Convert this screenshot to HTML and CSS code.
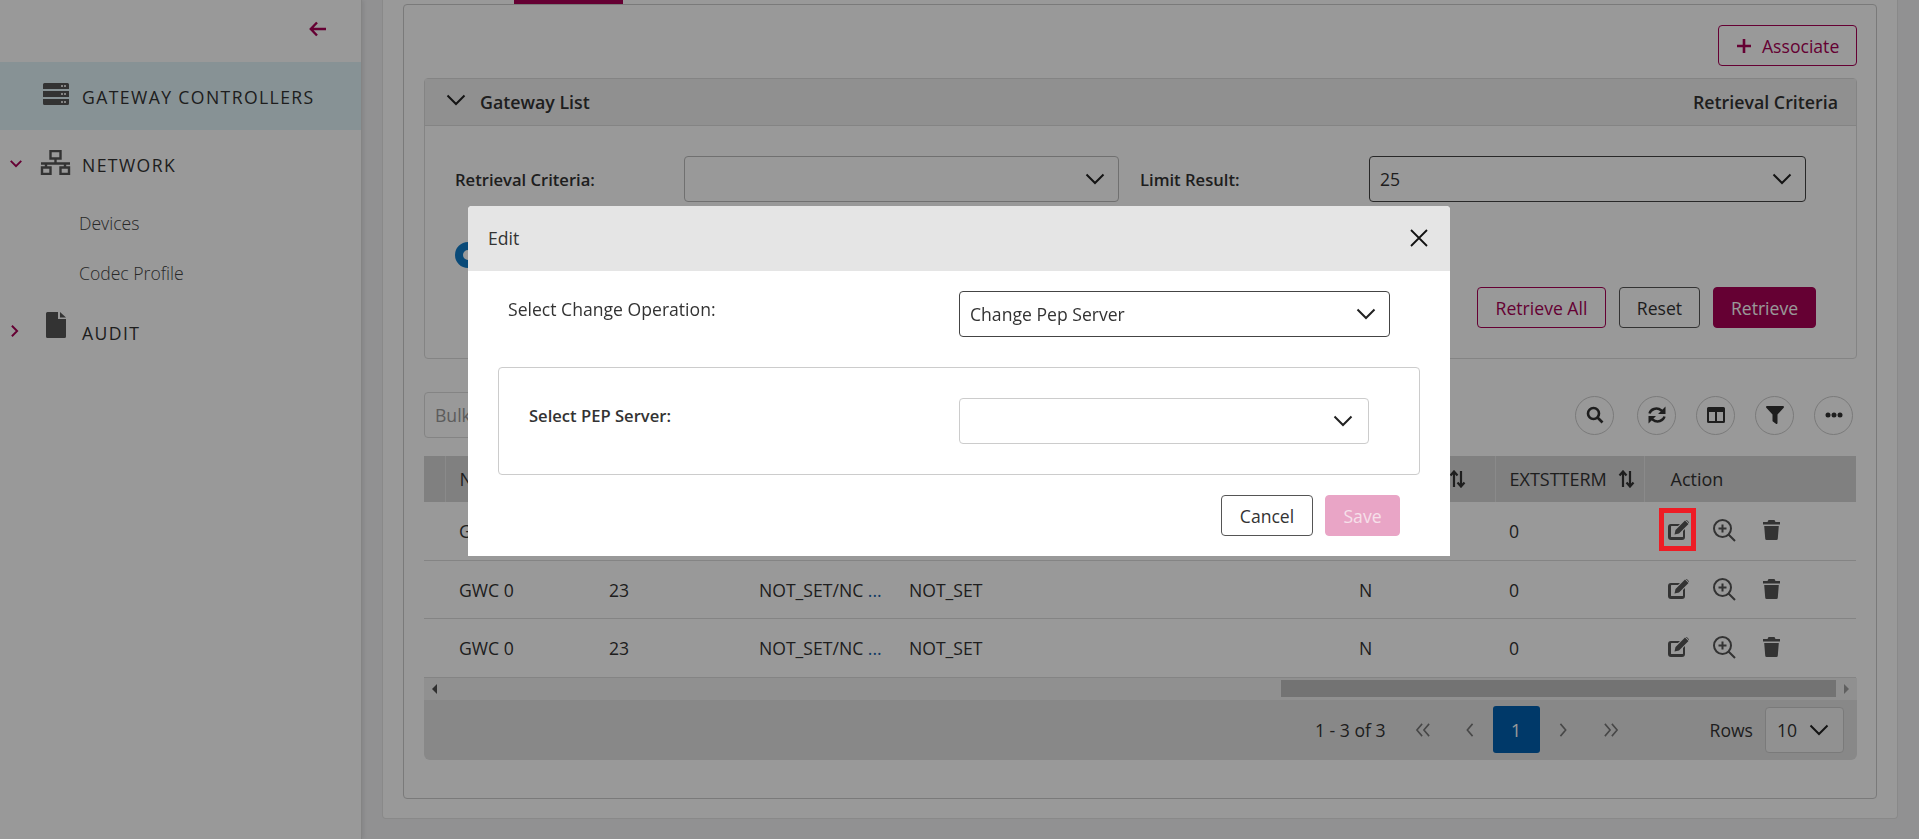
FILE: index.html
```html
<!DOCTYPE html>
<html>
<head>
    <title>Gateway Controllers</title>
    <link rel="stylesheet" href="styles.css">
</head>
<body>

    <div class="page">
        <aside class="sidebar">
            <div class="side-top">
                <svg class="back-arrow" viewBox="0 0 18 16"><path d="M8 1.500 1.800 8 8 14.500M2 8h15" /></svg>
            </div>
            <a class="nav-item active">
                <span class="caret"></span>
                <svg class="nav-icon" viewBox="0 0 26 22"><path d="M1.500 0h23A1.500 1.500 0 0 1 26 1.500V6H0V1.500A1.500 1.500 0 0 1 1.500 0zM0 8h26v6H0zM0 16h26v4.500a1.500 1.500 0 0 1-1.500 1.500h-23A1.500 1.500 0 0 1 0 20.500z" /><path class="dots" d="M18 2h2v2h-2zM21 2h2v2h-2zM18 10h2v2h-2zM21 10h2v2h-2zM18 18h2v2h-2zM21 18h2v2h-2z" /></svg>
                <span class="nav-label">GATEWAY CONTROLLERS</span>
            </a>
            <a class="nav-item">
                <svg class="caret" viewBox="0 0 16 10"><path d="M2 2l6 6 6-6" /></svg>
                <svg class="nav-icon" viewBox="0 0 31 25"><path class="line" d="M10.500 1h10v7.500h-10zM15.500 8.500v5M1 13.500h29M6 13.500v4M25 13.500v4M2 17.500h8.500V24H2zM20.500 17.500H29V24h-8.500z" /></svg>
                <span class="nav-label">NETWORK</span>
            </a>
            <a class="sub-item">Devices</a>
            <a class="sub-item">Codec Profile</a>
            <a class="nav-item audit">
                <svg class="caret caret-right" viewBox="0 0 10 16"><path d="M2 2l6 6-6 6" /></svg>
                <svg class="nav-icon file" viewBox="0 0 20 26"><path d="M0 1.500A1.500 1.500 0 0 1 1.500 0H12v7h8v17.500a1.500 1.500 0 0 1-1.500 1.500h-17A1.500 1.500 0 0 1 0 24.500zM14 0l6 5.500h-6z" /></svg>
                <span class="nav-label">AUDIT</span>
            </a>
        </aside>

        <main class="main">
            <div class="outer-card">
                <div class="tab-mark"></div>
                <div class="panel">
                    <div class="panel-actions">
                        <button class="btn btn-outline btn-associate"><svg viewBox="0 0 16 16"><path d="M8 1v14M1 8h14" /></svg>Associate</button>
                    </div>

                    <section class="criteria">
                        <div class="criteria-head">
                            <svg class="chev chev-head" viewBox="0 0 20 12"><path d="M1.500 1.500 10 10l8.500-8.500" /></svg>
                            <span class="criteria-title">Gateway List</span>
                            <span class="criteria-side">Retrieval Criteria</span>
                        </div>
                        <div class="criteria-body">
                            <div class="criteria-form">
                                <label class="form-label">Retrieval Criteria:</label>
                                <div class="select select-muted"><svg class="chev" viewBox="0 0 20 12"><path d="M1.500 1.500 10 10l8.500-8.500" /></svg></div>
                                <label class="form-label limit-label">Limit Result:</label>
                                <div class="select select-dark"><span>25</span><svg class="chev" viewBox="0 0 20 12"><path d="M1.500 1.500 10 10l8.500-8.500" /></svg></div>
                            </div>
                            <div class="radio-row"><span class="radio-dot"></span></div>
                            <div class="criteria-buttons">
                                <button class="btn btn-outline">Retrieve All</button>
                                <button class="btn btn-plain">Reset</button>
                                <button class="btn btn-primary">Retrieve</button>
                            </div>
                        </div>
                    </section>

                    <div class="toolbar">
                        <input class="bulk-input" placeholder="Bulk">
                        <div class="tool-group">
                            <span class="tool"><svg viewBox="0 0 18 18"><circle cx="7.500" cy="7.500" r="5.500" class="ring" /><path class="ring" d="M11.500 11.500 16.500 16.500" /></svg></span>
                            <span class="tool"><svg viewBox="0 0 20 20"><path class="ring sync" d="M2.500 8.500C3.500 4.500 9.500 1.500 14.500 5.500L17 8M17.500 11.500C16.500 15.500 10.500 18.500 5.500 14.500L3 12" /><path d="M18.500 1.500v7.500h-7.500zM1.500 18.500v-7.500h7.500z" /></svg></span>
                            <span class="tool"><svg viewBox="0 0 18 16"><path d="M1.500 0h15A1.500 1.500 0 0 1 18 1.500v13a1.500 1.500 0 0 1-1.500 1.500h-15A1.500 1.500 0 0 1 0 14.500v-13A1.500 1.500 0 0 1 1.500 0zM2 5v9h6V5zM10 5v9h6V5z" fill-rule="evenodd" /></svg></span>
                            <span class="tool"><svg viewBox="0 0 18 18"><path d="M1 0h16a1 1 0 0 1 .7 1.700L11.500 8.500V17a1 1 0 0 1-1.600.8l-3-2.300a1 1 0 0 1-.4-.8V8.500L.3 1.700A1 1 0 0 1 1 0z" /></svg></span>
                            <span class="tool"><svg viewBox="0 0 18 6"><circle cx="3" cy="3" r="2.500" /><circle cx="9" cy="3" r="2.500" /><circle cx="15" cy="3" r="2.500" /></svg></span>
                        </div>
                    </div>

                    <table class="grid">
                        <thead>
                            <tr>
                                <th class="col-check"></th>
                                <th>Name</th>
                                <th></th>
                                <th></th>
                                <th></th>
                                <th></th>
                                <th></th>
                                <th><span class="th-inner"><span class="th-wide"></span><svg class="sort" viewBox="0 0 16 18"><path d="M4.500 17V2M1 5.500l3.500-4 3.500 4M11.500 1v15M8 12.500l3.500 4 3.500-4" /></svg></span></th>
                                <th class="col-ext"><span class="th-inner">EXTSTTERM<svg class="sort" viewBox="0 0 16 18"><path d="M4.500 17V2M1 5.500l3.500-4 3.500 4M11.500 1v15M8 12.500l3.500 4 3.500-4" /></svg></span></th>
                                <th class="col-action">Action</th>
                            </tr>
                        </thead>
                        <tbody>
                            <tr>
                                <td></td><td>GWC 0</td><td></td><td></td><td></td><td></td><td></td><td></td><td>0</td>
                                <td class="col-action">
                                    <div class="row-actions">
                                        <span class="act">
                                            <svg class="ic-edit" viewBox="0 0 21 20"><path d="M3 4h9l-2 2H3.500a.5.500 0 0 0-.5.500v10a.5.500 0 0 0 .5.500h11a.5.500 0 0 0 .5-.500V11l2-2v8a3 3 0 0 1-3 3H3a3 3 0 0 1-3-3V7a3 3 0 0 1 3-3zM17 .5l3.500 3.500L11 13.500l-4.500 1 1-4.500zM17.800 0l1 0 2.200 2.200v1z" /></svg>
                                            <span class="flag"></span>
                                        </span>
                                        <span class="act"><svg class="ic-zoom" viewBox="0 0 23 23"><circle class="ring thin" cx="9.500" cy="9.500" r="8.500" /><path class="ring thin" d="M15.500 15.500l6.500 6.500M9.500 5.500v8M5.500 9.500h8" /></svg></span>
                                        <span class="act"><svg class="ic-trash" viewBox="0 0 17 20"><path d="M5.500 0h6l1 2H17v2.500H0V2h4.500zM1.200 6h14.600l-1 12.500a1.500 1.500 0 0 1-1.500 1.500H3.700a1.500 1.500 0 0 1-1.500-1.500z" /></svg></span>
                                    </div>
                                </td>
                            </tr>
                            <tr>
                                <td></td><td>GWC 0</td><td>23</td><td>NOT_SET/NC <span class="more">...</span></td><td>NOT_SET</td><td></td><td></td><td>N</td><td>0</td>
                                <td class="col-action">
                                    <div class="row-actions">
                                        <span class="act"><svg class="ic-edit" viewBox="0 0 21 20"><path d="M3 4h9l-2 2H3.500a.5.500 0 0 0-.5.500v10a.5.500 0 0 0 .5.500h11a.5.500 0 0 0 .5-.500V11l2-2v8a3 3 0 0 1-3 3H3a3 3 0 0 1-3-3V7a3 3 0 0 1 3-3zM17 .5l3.500 3.500L11 13.500l-4.500 1 1-4.500zM17.800 0l1 0 2.200 2.200v1z" /></svg></span>
                                        <span class="act"><svg class="ic-zoom" viewBox="0 0 23 23"><circle class="ring thin" cx="9.500" cy="9.500" r="8.500" /><path class="ring thin" d="M15.500 15.500l6.500 6.500M9.500 5.500v8M5.500 9.500h8" /></svg></span>
                                        <span class="act"><svg class="ic-trash" viewBox="0 0 17 20"><path d="M5.500 0h6l1 2H17v2.500H0V2h4.500zM1.200 6h14.600l-1 12.500a1.500 1.500 0 0 1-1.500 1.500H3.700a1.500 1.500 0 0 1-1.500-1.500z" /></svg></span>
                                    </div>
                                </td>
                            </tr>
                            <tr class="row-last">
                                <td></td><td>GWC 0</td><td>23</td><td>NOT_SET/NC <span class="more">...</span></td><td>NOT_SET</td><td></td><td></td><td>N</td><td>0</td>
                                <td class="col-action">
                                    <div class="row-actions">
                                        <span class="act"><svg class="ic-edit" viewBox="0 0 21 20"><path d="M3 4h9l-2 2H3.500a.5.500 0 0 0-.5.500v10a.5.500 0 0 0 .5.500h11a.5.500 0 0 0 .5-.500V11l2-2v8a3 3 0 0 1-3 3H3a3 3 0 0 1-3-3V7a3 3 0 0 1 3-3zM17 .5l3.500 3.500L11 13.500l-4.500 1 1-4.500zM17.800 0l1 0 2.200 2.200v1z" /></svg></span>
                                        <span class="act"><svg class="ic-zoom" viewBox="0 0 23 23"><circle class="ring thin" cx="9.500" cy="9.500" r="8.500" /><path class="ring thin" d="M15.500 15.500l6.500 6.500M9.500 5.500v8M5.500 9.500h8" /></svg></span>
                                        <span class="act"><svg class="ic-trash" viewBox="0 0 17 20"><path d="M5.500 0h6l1 2H17v2.500H0V2h4.500zM1.200 6h14.600l-1 12.500a1.500 1.500 0 0 1-1.500 1.500H3.700a1.500 1.500 0 0 1-1.500-1.500z" /></svg></span>
                                    </div>
                                </td>
                            </tr>
                        </tbody>
                    </table>

                    <div class="hscroll">
                        <span class="arrow-left"></span>
                        <span class="thumb"></span>
                        <span class="arrow-right"></span>
                    </div>

                    <div class="pager">
                        <span class="page-count">1 - 3 of 3</span>
                        <svg class="page-arrow first" viewBox="0 0 18 16"><path d="M8 1 2 8l6 7M16 1l-6 7 6 7" /></svg>
                        <svg class="page-arrow prev" viewBox="0 0 9 16"><path d="M8 1 2 8l6 7" /></svg>
                        <span class="page-current">1</span>
                        <svg class="page-arrow next" viewBox="0 0 9 16"><path d="M1 1l6 7-6 7" /></svg>
                        <svg class="page-arrow last" viewBox="0 0 18 16"><path d="M2 1l6 7-6 7M10 1l6 7-6 7" /></svg>
                        <span class="rows-label">Rows</span>
                        <div class="rows-select"><span>10</span><svg class="chev" viewBox="0 0 20 12"><path d="M1.500 1.500 10 10l8.500-8.500" /></svg></div>
                    </div>
                </div>
            </div>
        </main>
    </div>

    <div class="mask"></div>

    <div class="dialog">
        <div class="dialog-head">
            <span>Edit</span>
            <svg class="dialog-close" viewBox="0 0 18 18"><path d="M1 1l16 16M17 1 1 17" /></svg>
        </div>
        <div class="dialog-body">
            <div class="dialog-row">
                <label class="dialog-label">Select Change Operation:</label>
                <div class="select select-dark dialog-select"><span>Change Pep Server</span><svg class="chev" viewBox="0 0 20 12"><path d="M1.500 1.500 10 10l8.500-8.500" /></svg></div>
            </div>
            <div class="dialog-box">
                <label class="box-label">Select PEP Server:</label>
                <div class="select box-select"><svg class="chev" viewBox="0 0 20 12"><path d="M1.500 1.500 10 10l8.500-8.500" /></svg></div>
            </div>
            <div class="dialog-buttons">
                <button class="btn btn-cancel">Cancel</button>
                <button class="btn btn-save">Save</button>
            </div>
        </div>
    </div>

</body>
</html>
```

FILE: styles.css
```css
* {
    box-sizing: border-box;
}

html, body {
    margin: 0;
    height: 839px;
    overflow: hidden;
}

body {
    font-family: "Open Sans", Arial, sans-serif;
    font-size: 17.6px;
    color: #333;
}

button {
    font-family: inherit;
}

.page {
    display: flex;
    height: 839px;
    background-color: #f2f2f4;
}

/* left menu */
.sidebar {
    width: 362px;
    flex-shrink: 0;
    background-color: #fff;
    border-right: 1px solid #ddd;
    box-shadow: 2px 0 4px rgba(0, 0, 0, 0.08);
}

.side-top {
    height: 62px;
    padding: 21px 0 0 309px;
}

.back-arrow {
    display: block;
    width: 18px;
    height: 16px;
    fill: none;
    stroke: #a80055;
    stroke-width: 2.4;
}

.nav-item {
    display: flex;
    align-items: center;
    height: 68px;
    letter-spacing: 1.4px;
    font-weight: 500;
    position: relative;
}

.nav-item.active {
    background-color: #e2f3f9;
}

.nav-item .caret {
    position: absolute;
    left: 9px;
    top: 29px;
    width: 14px;
    height: 9px;
    fill: none;
    stroke: #a80055;
    stroke-width: 2.2;
}

.nav-item .caret-right {
    left: 10px;
    top: 26px;
    width: 9px;
    height: 14px;
}

.nav-icon {
    position: absolute;
    left: 43px;
    top: 21px;
    width: 26px;
    height: 22px;
    fill: #555;
}

.nav-icon .dots {
    fill: #ddd;
}

.nav-icon .line {
    fill: none;
    stroke: #555;
    stroke-width: 2.4;
}

.nav-item:nth-child(3) .nav-icon {
    left: 40px;
    top: 20px;
    width: 31px;
    height: 25px;
}

.nav-icon.file {
    left: 46px;
    top: 14px;
    width: 20px;
    height: 26px;
}

.nav-label {
    margin-left: 82px;
    padding-top: 2px;
    color: #333;
}

.sub-item {
    display: flex;
    align-items: center;
    height: 50px;
    padding-left: 79px;
    font-weight: 300;
    color: #444;
}

/* content */
.main {
    flex: 1;
    padding: 0 21px 20px 20px;
}

.outer-card {
    height: 819px;
    background-color: #fff;
    border: 1px solid #e4e4e4;
    border-top: none;
    border-radius: 0 0 4px 4px;
    padding: 0 20px 20px;
}

.tab-mark {
    width: 109px;
    height: 4px;
    margin-left: 111px;
    background-color: #a80055;
}

.panel {
    height: 795px;
    border: 1px solid #ccc;
    border-radius: 4px;
    padding: 20px 19px 0 20px;
}

.panel-actions {
    display: flex;
    justify-content: flex-end;
}

.btn {
    height: 41px;
    padding: 0 18px;
    font-size: 17.6px;
    border-radius: 4px;
    background-color: transparent;
    color: #333;
}

.btn-outline {
    border: 1px solid #a80055;
    color: #a80055;
}

.btn-plain {
    border: 1px solid #555;
    color: #333;
}

.btn-primary {
    border: 1px solid #a80055;
    background-color: #a80055;
    color: #fff;
}

.btn-associate {
    display: flex;
    align-items: center;
    gap: 10px;
    width: 139px;
    padding: 0 17px;
    white-space: nowrap;
}

.btn-associate svg {
    width: 16px;
    height: 16px;
    fill: none;
    stroke: #a80055;
    stroke-width: 2.6;
    flex-shrink: 0;
}

/* retrieval section */
.criteria {
    margin-top: 12px;
    border: 1px solid #ddd;
    border-radius: 4px;
}

.criteria-head {
    display: flex;
    align-items: center;
    height: 47px;
    padding: 0 18px 0 21px;
    background-color: #f0f0f0;
    border-bottom: 1px solid #ddd;
    font-size: 17.8px;
    font-weight: 550;
}

.chev {
    display: block;
    width: 20px;
    height: 12px;
    fill: none;
    stroke: #222;
    stroke-width: 2;
    flex-shrink: 0;
}

.chev-head {
    margin: -4px 14px 0 0;
}

.criteria-title {
    flex: 1;
}

.criteria-body {
    padding: 30px 0 30px;
    height: 232px;
}

.criteria-form {
    display: grid;
    grid-template-columns: 259px 435px 250px 437px;
    align-items: center;
}

.form-label {
    padding-left: 30px;
    font-size: 16.6px;
    font-weight: 550;
}

.limit-label {
    padding-left: 21px;
}

.select {
    display: flex;
    align-items: center;
    justify-content: space-between;
    height: 46px;
    padding: 0 13px 0 10px;
    border-radius: 4px;
    background-color: #fff;
}

.select .chev {
    margin-left: auto;
}

.select-muted {
    border: 1px solid #bbb;
}

.select-dark {
    border: 1px solid #444;
}

.radio-row {
    height: 26px;
    margin-top: 40px;
    padding-left: 30px;
}

.radio-dot {
    display: block;
    width: 26px;
    height: 26px;
    border-radius: 50%;
    border: 8px solid #127cc8;
}

.criteria-buttons {
    display: flex;
    justify-content: flex-end;
    gap: 13px;
    margin-top: 19px;
    padding-right: 40px;
}

.criteria-buttons .btn-outline {
    width: 129px;
    padding: 0;
}

.criteria-buttons .btn-plain {
    width: 81px;
    padding: 0;
}

.criteria-buttons .btn-primary {
    width: 103px;
    padding: 0;
}

/* toolbar above table */
.toolbar {
    display: flex;
    align-items: center;
    justify-content: space-between;
    margin-top: 33px;
    height: 46px;
}

.bulk-input {
    width: 220px;
    height: 46px;
    padding: 0 10px;
    border: 1px solid #ddd;
    border-radius: 4px;
    font-family: inherit;
    font-size: 17.6px;
}

.bulk-input::placeholder {
    color: #999;
}

.tool-group {
    display: flex;
    gap: 20px;
    padding-right: 4px;
}

.tool {
    display: flex;
    align-items: center;
    justify-content: center;
    width: 39px;
    height: 39px;
    border: 1px solid #ccc;
    border-radius: 50%;
}

.tool:first-child {
    margin-right: 3px;
}

.tool svg {
    width: 18px;
    height: 18px;
    fill: #333;
}

.tool:nth-child(2) svg {
    width: 20px;
    height: 20px;
}

.ring {
    fill: none;
    stroke: #333;
    stroke-width: 2.6;
}

.ring.thin {
    stroke-width: 2;
}

.ring.sync {
    stroke-width: 2.4;
}

/* table */
.grid {
    width: 1432px;
    margin-top: 18px;
    border-collapse: collapse;
    table-layout: fixed;
}

.grid th {
    width: 150px;
    height: 46px;
    padding: 0 0 0 14px;
    background-color: #d5d5d5;
    border-left: 1px solid #e6e6e6;
    text-align: left;
    font-size: 18px;
    font-weight: 500;
    white-space: nowrap;
    overflow: hidden;
}

.grid th.col-check {
    width: 21px;
    border-left: none;
}

.grid th.col-ext {
    width: 149px;
}

.grid th.col-action {
    width: 212px;
    padding-left: 26px;
}

.grid td {
    height: 58px;
    padding: 1px 0 0 14px;
    border-bottom: 1px solid #ddd;
    white-space: nowrap;
    overflow: hidden;
}

.grid .row-last td {
    height: 59px;
}

.more {
    color: #1d62a8;
}

.th-inner {
    display: flex;
    align-items: center;
    gap: 11px;
}

.th-wide {
    width: 78px;
}

.sort {
    width: 17px;
    height: 18px;
    fill: none;
    stroke: #333;
    stroke-width: 2.2;
}

.grid td.col-action {
    padding-left: 24px;
    overflow: visible;
}

.row-actions {
    display: flex;
    align-items: center;
    gap: 24px;
    margin-top: -1px;
}

.act {
    position: relative;
    display: block;
    height: 23px;
}

.act svg {
    display: block;
    fill: #555;
}

.act .ring {
    stroke: #555;
}

.ic-edit {
    width: 21px;
    height: 20px;
    margin-top: 1px;
}

.ic-zoom {
    width: 23px;
    height: 23px;
}

.ic-trash {
    width: 17px;
    height: 20px;
    margin: 1px 0 0 3px;
}

/* sits above the dim layer, it is a marker on the screenshot */
.flag {
    position: absolute;
    left: -9px;
    top: -11px;
    width: 37px;
    height: 43px;
    border: 5px solid #ee1c25;
    z-index: 20;
}

/* scrollbar and pager */
.hscroll {
    display: flex;
    align-items: center;
    justify-content: space-between;
    height: 22px;
    padding: 0 8px;
    background-color: #f0f0f0;
}

.arrow-left {
    border-right: 5px solid #505050;
    border-top: 5px solid transparent;
    border-bottom: 5px solid transparent;
}

.arrow-right {
    border-left: 5px solid #a0a0a0;
    border-top: 5px solid transparent;
    border-bottom: 5px solid transparent;
}

.thumb {
    width: 555px;
    height: 17px;
    margin-left: auto;
    margin-right: 8px;
    background-color: #c0c0c0;
}

.pager {
    display: flex;
    align-items: center;
    height: 60px;
    padding-right: 13px;
    background-color: #e3e3e3;
    border-radius: 0 0 6px 6px;
}

.page-count {
    margin-left: auto;
}

.page-arrow {
    width: 18px;
    height: 14px;
    fill: none;
    stroke: #777;
    stroke-width: 1.8;
}

.page-arrow.first {
    margin-left: 28px;
}

.page-arrow.prev {
    width: 9px;
    margin-left: 33px;
}

.page-current {
    display: flex;
    align-items: center;
    justify-content: center;
    width: 47px;
    height: 47px;
    margin-left: 19px;
    border-radius: 3px;
    background-color: #0060b0;
    color: #fff;
}

.page-arrow.next {
    width: 9px;
    margin-left: 19px;
}

.page-arrow.last {
    margin-left: 34px;
}

.rows-label {
    margin-left: 90px;
}

.rows-select {
    display: flex;
    align-items: center;
    justify-content: space-between;
    width: 79px;
    height: 46px;
    margin-left: 12px;
    padding: 0 14px 0 11px;
    border: 1px solid #ccc;
    border-radius: 4px;
    background-color: #f2f2f2;
}

/* dialog */
.mask {
    position: fixed;
    left: 0;
    top: 0;
    right: 0;
    bottom: 0;
    background-color: rgba(0, 0, 0, 0.4);
    z-index: 10;
}

.dialog {
    position: fixed;
    left: 468px;
    top: 206px;
    width: 982px;
    height: 350px;
    background-color: #fff;
    border-radius: 4px 4px 0 0;
    z-index: 15;
}

.dialog-head {
    display: flex;
    align-items: center;
    justify-content: space-between;
    height: 65px;
    padding: 0 22px 2px 20px;
    background-color: #e5e5e5;
    border-radius: 4px 4px 0 0;
    font-weight: 500;
}

.dialog-close {
    width: 18px;
    height: 18px;
    fill: none;
    stroke: #111;
    stroke-width: 1.8;
}

.dialog-body {
    padding-top: 20px;
}

.dialog-row {
    display: flex;
    align-items: flex-start;
}

.dialog-label {
    width: 491px;
    padding: 6px 0 0 40px;
    font-weight: 400;
}

.dialog-select {
    width: 431px;
}

.dialog-box {
    display: flex;
    align-items: flex-start;
    height: 108px;
    margin: 30px 30px 0;
    padding-top: 30px;
    border: 1px solid #ccc;
    border-radius: 4px;
}

.box-label {
    width: 460px;
    padding: 6px 0 0 30px;
    font-size: 16.6px;
    font-weight: 550;
}

.box-select {
    width: 410px;
    padding-right: 15px;
    border: 1px solid #ccc;
}

.dialog-buttons {
    display: flex;
    justify-content: flex-end;
    gap: 12px;
    margin-top: 20px;
    padding-right: 50px;
}

.btn-cancel {
    width: 92px;
    padding: 0;
    border: 1px solid #555;
    background-color: #fff;
    color: #333;
}

.btn-save {
    width: 75px;
    padding: 0;
    border: 1px solid #e9a5c6;
    background-color: #e9a5c6;
    color: #f6e0ea;
}
```
